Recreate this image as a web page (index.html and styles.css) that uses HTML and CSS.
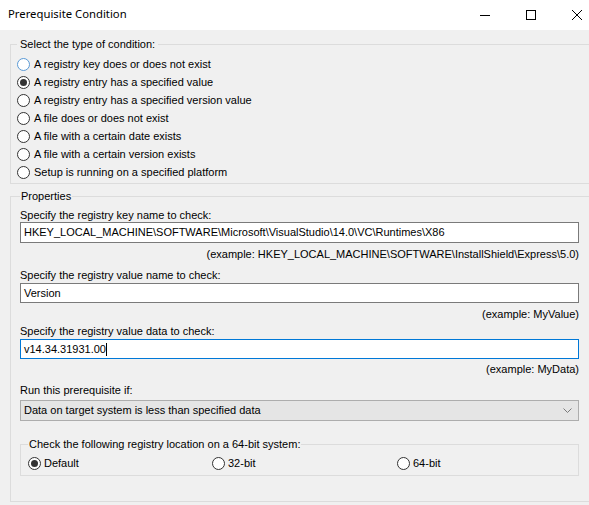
FILE: index.html
```html
<!DOCTYPE html>
<html lang="en">
<head>
    <meta charset="UTF-8">
    <meta name="viewport" content="width=device-width, initial-scale=1.0">
    <title>Prerequisite Condition</title>
    <link rel="stylesheet" href="styles.css">
</head>
<body>
    <div class="window">
        <!-- title bar -->
        <div class="titlebar">
            <div class="title">Prerequisite Condition</div>
            <div class="caption-btn">
                <svg width="10" height="10" viewBox="0 0 10 10"><line x1="0" y1="5.5" x2="10" y2="5.5" stroke="#000" stroke-width="1"/></svg>
            </div>
            <div class="caption-btn">
                <svg width="10" height="10" viewBox="0 0 10 10"><rect x="0.5" y="0.5" width="9" height="9" fill="none" stroke="#000" stroke-width="1"/></svg>
            </div>
            <div class="caption-btn">
                <svg width="10" height="10" viewBox="0 0 10 10"><path d="M0 0L10 10M10 0L0 10" stroke="#000" stroke-width="1"/></svg>
            </div>
        </div>

        <div class="client">
            <!-- condition type -->
            <fieldset class="group type-group">
                <legend>Select the type of condition:</legend>
                <div class="option"><span class="radio hot"></span>A registry key does or does not exist</div>
                <div class="option"><span class="radio on"></span>A registry entry has a specified value</div>
                <div class="option"><span class="radio"></span>A registry entry has a specified version value</div>
                <div class="option"><span class="radio"></span>A file does or does not exist</div>
                <div class="option"><span class="radio"></span>A file with a certain date exists</div>
                <div class="option"><span class="radio"></span>A file with a certain version exists</div>
                <div class="option"><span class="radio"></span>Setup is running on a specified platform</div>
            </fieldset>

            <!-- properties -->
            <fieldset class="group props">
                <legend>Properties</legend>

                <div class="label first">Specify the registry key name to check:</div>
                <div class="edit">HKEY_LOCAL_MACHINE\SOFTWARE\Microsoft\VisualStudio\14.0\VC\Runtimes\X86</div>
                <div class="example">(example: HKEY_LOCAL_MACHINE\SOFTWARE\InstallShield\Express\5.0)</div>

                <div class="label">Specify the registry value name to check:</div>
                <div class="edit short">Version</div>
                <div class="example">(example: MyValue)</div>

                <div class="label tight">Specify the registry value data to check:</div>
                <div class="edit short focus">v14.34.31931.00<span class="caret"></span></div>
                <div class="example tight">(example: MyData)</div>

                <div class="label">Run this prerequisite if:</div>
                <div class="combo">
                    <span>Data on target system is less than specified data</span>
                    <svg width="9" height="5" viewBox="0 0 9 5"><polyline points="0.5,0.5 4.5,4.5 8.5,0.5" fill="none" stroke="#7a7a7a" stroke-width="1"/></svg>
                </div>

                <fieldset class="group bitness">
                    <legend>Check the following registry location on a 64-bit system:</legend>
                    <div class="bit-options">
                        <div class="option"><span class="radio on"></span>Default</div>
                        <div class="option"><span class="radio"></span>32-bit</div>
                        <div class="option"><span class="radio"></span>64-bit</div>
                    </div>
                </fieldset>
            </fieldset>
        </div>
    </div>
</body>
</html>
```

FILE: styles.css
```css
*{
    margin: 0;
    padding: 0;
    box-sizing: border-box;
}
body{
    width: 589px;
    height: 505px;
    overflow: hidden;
    background: #f0f0f0;
    color: #000;
    font: 11px/13px "Liberation Sans", Arial, sans-serif;
}
.window{
    width: 600px;
}

/* title bar */
.titlebar{
    height: 30px;
    background: #fff;
    display: flex;
    align-items: center;
}
.titlebar .title{
    flex: 1;
    padding: 0 0 3px 8px;
    font: 11.3px "Noto Sans", sans-serif;
}
.caption-btn{
    width: 46px;
    height: 30px;
    display: flex;
    align-items: center;
    justify-content: center;
}
.caption-btn svg{
    display: block;
}

.client{
    padding: 8px 8px 0 10px;
}

/* group boxes */
.group{
    border: 1px solid #dcdcdc;
}
.group legend{
    line-height: 13px;
    padding: 0 3px;
}
.type-group{
    padding: 4px 6px 2px 6px;
}
.props{
    margin-top: 6px;
    padding: 0 12px 25px 9px;
}
.props > legend{
    padding: 0 1px;
}
.bitness{
    margin-top: 17px;
    padding: 3px 7px 3px 7px;
}
.bitness legend{
    padding: 0 1px;
}

/* radio buttons */
.option{
    display: flex;
    align-items: center;
    height: 18px;
    white-space: nowrap;
}
.radio{
    position: relative;
    width: 13px;
    height: 13px;
    margin-right: 4px;
    border: 1px solid #333;
    border-radius: 50%;
    background: #fff;
    flex-shrink: 0;
}
.radio.hot{
    border-color: #5a9ad6;
}
.radio.on::after{
    content: "";
    position: absolute;
    top: 2px;
    left: 2px;
    width: 7px;
    height: 7px;
    border-radius: 50%;
    background: #333;
}
.bit-options{
    display: grid;
    grid-template-columns: 184px 185px auto;
}
.bit-options .radio{
    margin-right: 3px;
}

/* fields */
.label{
    margin-top: 8px;
}
.label.first{
    margin-top: 6px;
}
.label.tight{
    margin-top: 4px;
}
.edit{
    height: 21px;
    padding-left: 3px;
    border: 1px solid #7a7a7a;
    background: #fff;
    display: flex;
    align-items: center;
    white-space: nowrap;
}
.edit.short{
    height: 20px;
    margin-top: 1px;
}
.edit.focus{
    border-color: #0078d7;
}
.caret{
    width: 1px;
    height: 13px;
    background: #000;
}
.example{
    margin-top: 5px;
    text-align: right;
}
.example.tight{
    margin-top: 4px;
}
.combo{
    height: 21px;
    margin-top: 3px;
    padding: 0 6px 0 3px;
    border: 1px solid #adadad;
    background: #e5e5e5;
    display: flex;
    align-items: center;
    justify-content: space-between;
}
```
